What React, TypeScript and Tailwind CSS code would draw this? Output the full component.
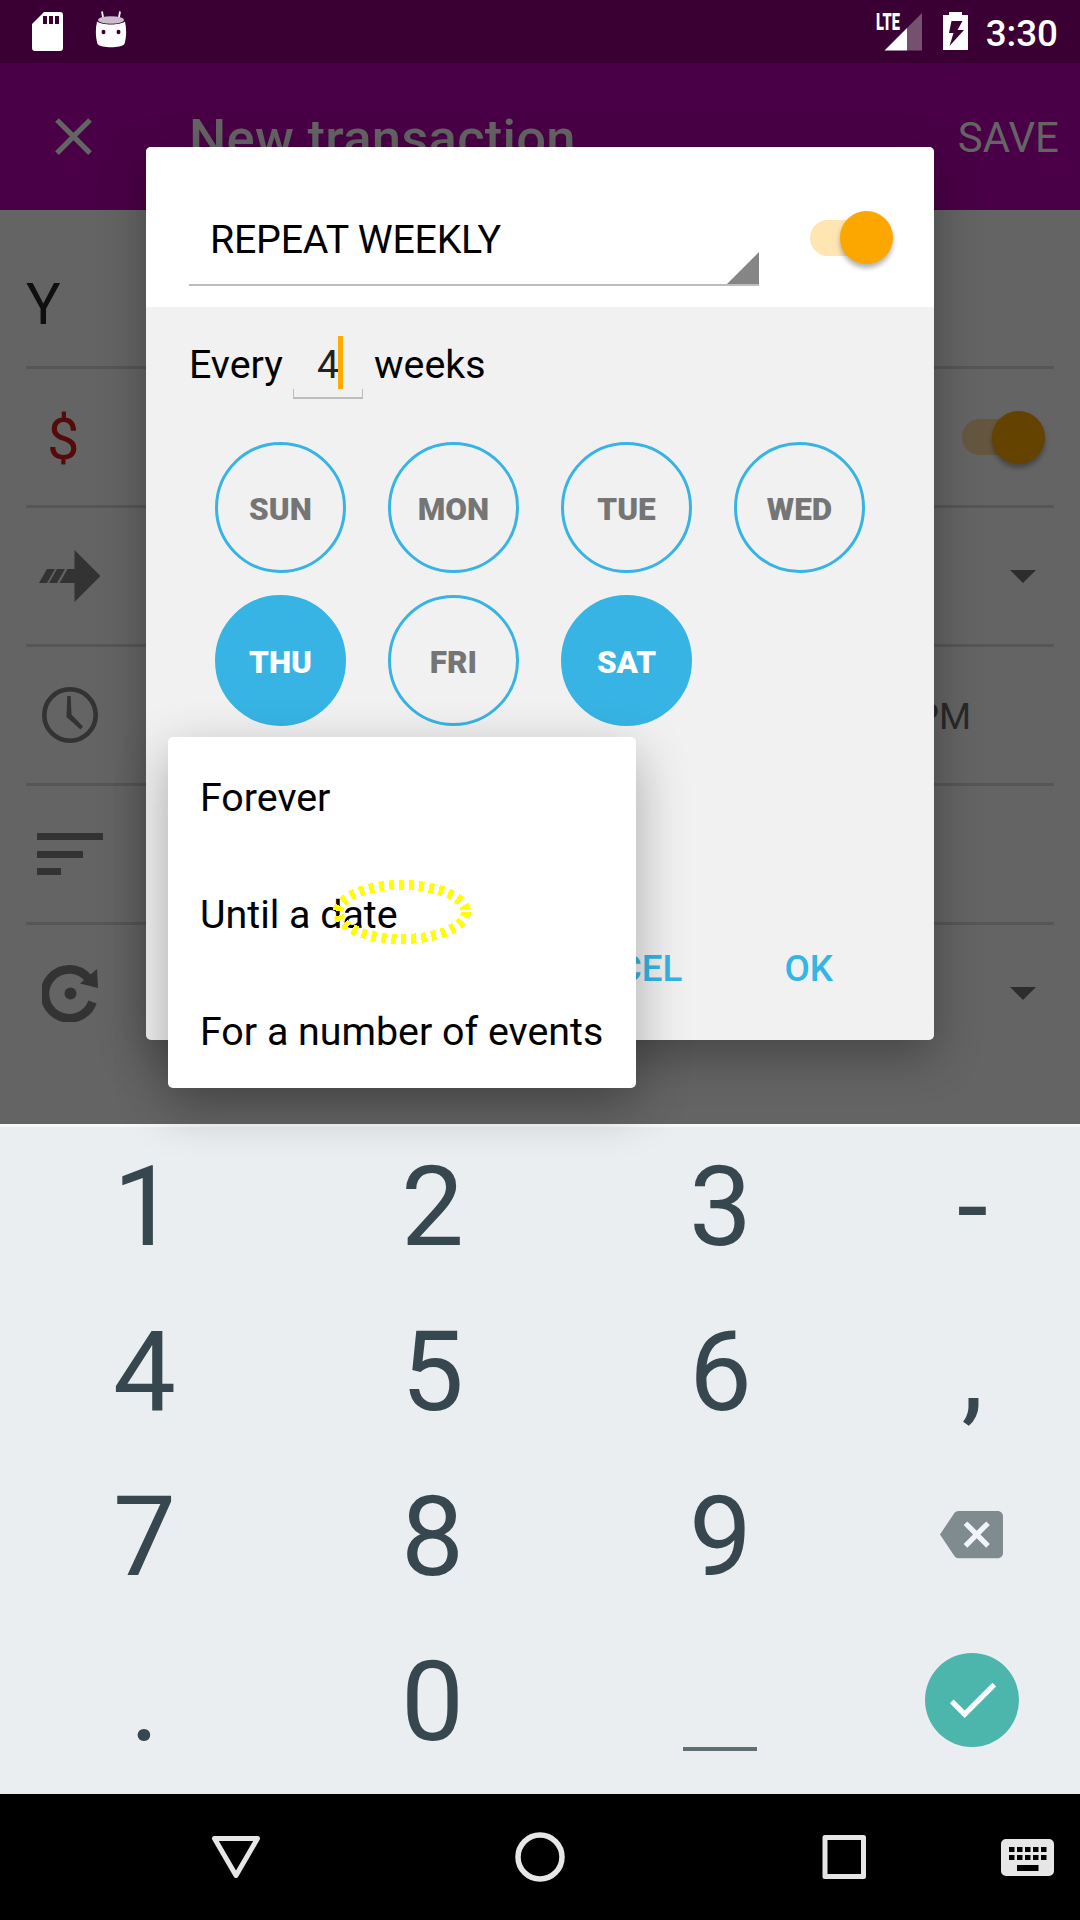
import type { ReactNode } from 'react';

const SdCardIcon = () => (
  <svg className="h-[39px] w-[32px]" viewBox="0 0 32 39">
    <path
      fill="#fff"
      fillRule="evenodd"
      d="M12 0H28a3 3 0 0 1 3 3V36a3 3 0 0 1-3 3H3a3 3 0 0 1-3-3V12zM11 4v8h4V4zM17 4v8h4V4zM23 4v8h4V4z"
    />
  </svg>
);

const AndroidIcon = () => (
  <svg className="h-[37px] w-[32px]" viewBox="0 0 32 37">
    <path d="M7 0.500L8.500 9M25 0.500L23.500 9" stroke="#fff" strokeWidth="1.800" />
    <path fill="#fff" d="M2 10.500C7 14.500 25 14.500 30 10.500C31.700 18 31.500 26 29.500 33C26 37.300 6 37.300 2.500 33C0.500 26 0.300 18 2 10.500Z" />
    <ellipse cx="16" cy="9" rx="13" ry="3.800" fill="#c9bccb" />
    <ellipse cx="8.500" cy="21" rx="2" ry="2.200" fill="#3a0034" />
    <ellipse cx="23.500" cy="21" rx="2" ry="2.200" fill="#3a0034" />
  </svg>
);

const SignalIcon = () => (
  <div className="relative h-[39px] w-[46px]">
    <svg className="h-[39px] w-[46px]" viewBox="0 0 46 39">
      <path d="M46 0V37.500H31V15z" fill="#75506f" />
      <path d="M31 15V37.500H8.500z" fill="#fff" />
    </svg>
    <span className="absolute left-0 top-[-3px] origin-left scale-x-[0.62] text-[23.500px] font-black leading-6 text-white">LTE</span>
  </div>
);

const BatteryIcon = () => (
  <svg className="h-[38px] w-[25px]" viewBox="0 0 25 38">
    <path fill="#fff" fillRule="evenodd" d="M6 0H19V3H25V38H0V3H6zM8.500 9L6 21H10.500L6.500 34L21 18H14.500L19.500 9z" />
  </svg>
);

const CloseIcon = () => (
  <svg className="size-[63px]" viewBox="0 0 24 24" fill="#646464">
    <path d="M19 6.410L17.590 5 12 10.590 6.410 5 5 6.410 10.590 12 5 17.590 6.410 19 12 13.410 17.590 19 19 17.590 13.410 12z" />
  </svg>
);

const ArrowIcon = () => (
  <svg className="ml-[13px] h-[52px] w-[62px]" viewBox="0 0 62 52" fill="#333">
    <path d="M35.500 0L61.500 26L35.500 52V33H20.500L28.500 19H35.500z" />
    <path d="M0 33L8 19H16L8 33zM10 33L18 19H26L18 33z" />
  </svg>
);

const ClockIcon = () => (
  <svg className="ml-4 size-[56px]" viewBox="0 0 56 56">
    <circle cx="28" cy="28" r="25.700" fill="none" stroke="#333" strokeWidth="4.600" />
    <path d="M25.300 9H28.700L29.500 27.500L41 39.500L38.500 42.500L24.500 30z" fill="#333" />
  </svg>
);

const NotesIcon = () => (
  <div className="ml-[11px] flex flex-col gap-[10.500px]">
    <div className="h-[7px] w-[66px] bg-[#333]" />
    <div className="h-[7px] w-[46px] bg-[#333]" />
    <div className="h-[7px] w-[24px] bg-[#333]" />
  </div>
);

const RepeatIcon = () => (
  <svg className="ml-4 size-[58px]" viewBox="0 0 58 58">
    <path d="M46.500 14.500A24.500 24.500 0 1 0 50.500 38" fill="none" stroke="#333" strokeWidth="8.700" />
    <path d="M55 5L56 24L38 19.500z" fill="#333" />
    <circle cx="28.500" cy="29.500" r="6" fill="#333" />
  </svg>
);

const Caret = () => (
  <svg className="mr-[18.500px] h-[13px] w-[26px]" viewBox="0 0 26 13">
    <path d="M0 0H26L13 13z" fill="#2d2d2d" />
  </svg>
);

const Toggle = ({ track, thumb }: { track: string; thumb: string }) => (
  <div className="relative flex h-[53px] w-[83px] items-center">
    <div className={`h-[36px] w-[66px] rounded-full ${track}`} />
    <div className={`absolute right-0 top-0 size-[53px] rounded-full shadow-[0_4px_5px_rgba(0,0,0,0.3)] ${thumb}`} />
  </div>
);

const Row = ({ left, right }: { left: ReactNode; right?: ReactNode }) => (
  <div className="flex h-[139px] items-center justify-between border-b-3 border-[#565656] last:border-transparent">
    {left}
    {right}
  </div>
);

const days = [
  { name: 'SUN', on: false },
  { name: 'MON', on: false },
  { name: 'TUE', on: false },
  { name: 'WED', on: false },
  { name: 'THU', on: true },
  { name: 'FRI', on: false },
  { name: 'SAT', on: true },
];

const Dialog = () => (
  <section className="absolute left-[146px] top-[147px] flex h-[893px] w-[788px] flex-col overflow-clip rounded-[5px] bg-[#f1f1f1] text-[39.375px] text-black">
    <header className="flex h-[160px] shrink-0 items-start bg-white pl-[43px]">
      <div className="relative mt-[45px] flex h-[94px] w-[570px] items-center border-b-2 border-[#bdbdbd] pl-[21px] pt-[3px] tracking-[-0.250px]">
        REPEAT WEEKLY
        <svg className="absolute bottom-0 right-0 size-[32px]" viewBox="0 0 32 32">
          <path d="M0 32L32 0V32z" fill="#858585" />
        </svg>
      </div>
      <div className="ml-[51px] mt-16">
        <Toggle track="bg-[#ffe5b2]" thumb="bg-[#fba700]" />
      </div>
    </header>
    <div className="flex h-[92px] items-start pl-[43px] pt-[29px] leading-[57px]">
      <span className="w-[104px]">Every</span>
      <div className="w-[70px]">
        <div className="flex h-[53px] justify-end pr-[20px] text-[#222]">
          <span className="-mr-px">4</span>
          <span className="h-[53px] w-[5px] bg-[#ffab00]" />
        </div>
        <div className="h-[10px] border-x-[1.500px] border-b-2 border-[#bdbdbd]" />
      </div>
      <span className="ml-[11px]">weeks</span>
    </div>
    <div className="mt-[43px] grid grid-cols-[repeat(4,131px)] gap-x-[42px] gap-y-[22px] pl-[69px]">
      {days.map((d) => (
        <div
          key={d.name}
          className={`flex size-[131px] items-center justify-center rounded-full border-3 border-[#37b4e4] pt-[4px] text-[31.500px] font-black ${
            d.on ? 'bg-[#37b4e4] text-white' : 'text-[#757575]'
          }`}
        >
          {d.name}
        </div>
      ))}
    </div>
    <footer className="mt-auto flex h-[142px] items-center justify-end pr-[101px] text-[36.750px] font-medium text-[#33b5e5]">
      <span className="mr-[102px]">CANCEL</span>
      <span>OK</span>
    </footer>
  </section>
);

const Menu = () => (
  <ul className="absolute left-[168px] top-[737px] w-[468px] rounded-[5px] bg-white text-[39.375px] text-black shadow-[0_18px_52px_rgba(0,0,0,0.3)]">
    {['Forever', 'Until a date', 'For a number of events'].map((t) => (
      <li key={t} className="flex h-[117px] items-center whitespace-nowrap pl-[32px] pt-[4px]">
        {t}
      </li>
    ))}
    <svg className="absolute left-[164px] top-[142px] h-[66px] w-[142px]" viewBox="0 0 142 66" shapeRendering="crispEdges">
      <ellipse cx="70" cy="33" rx="64" ry="27" fill="none" stroke="#ff0" strokeWidth="10" strokeDasharray="5 5" />
    </svg>
  </ul>
);

const Backspace = () => (
  <svg className="mr-[2px] size-[63px]" viewBox="0 0 24 24">
    <path fill="#f2f5f7" d="M8 6h12v12H8z" />
    <path
      fill="#808b8f"
      d="M22 3H7c-.69 0-1.230.35-1.590.88L0 12l5.410 8.110c.36.53.9.89 1.590.89h15c1.100 0 2-.9 2-2V5c0-1.100-.9-2-2-2zm-3 12.590L17.590 17 14 13.410 10.410 17 9 15.590 12.590 12 9 8.410 10.410 7 14 10.590 17.590 7 19 8.410 15.410 12 19 15.590z"
    />
  </svg>
);

const Enter = () => (
  <div className="flex size-[94px] items-center justify-center rounded-full bg-[#4db6ac]">
    <svg className="size-[63px]" viewBox="0 0 24 24" fill="#fff">
      <path d="M9 16.170L4.830 12l-1.420 1.410L9 19 21 7l-1.410-1.410z" />
    </svg>
  </div>
);

const keys: ReactNode[] = [
  '1', '2', '3', '-',
  '4', '5', '6', ',',
  '7', '8', '9', <Backspace />,
  '.', '0', <div className="mt-[98px] h-[4px] w-[74px] bg-[#5f7075]" />, <Enter />,
];

export default function App() {
  return (
    <div className="relative isolate flex h-[1920px] w-[1080px] flex-col overflow-hidden bg-[#646464] font-[Roboto,sans-serif]">
      <div className="flex h-[63px] items-start bg-[#3a0034] pl-8">
        <div className="mt-[12px]"><SdCardIcon /></div>
        <div className="ml-[31px] mt-[11px]"><AndroidIcon /></div>
        <div className="ml-auto mt-[12.500px]"><SignalIcon /></div>
        <div className="ml-[21px] mt-3"><BatteryIcon /></div>
        <span className="ml-[18px] mr-[22px] text-[36.750px] font-medium leading-[67px] text-white">3:30</span>
      </div>
      <div className="flex h-[147px] items-center bg-[#490046] pl-[42px] pr-[21px] text-[#646464]">
        <CloseIcon />
        <h1 className="ml-[84px] pt-[4px] text-[52.500px] font-medium tracking-[0.280px]">New transaction</h1>
        <span className="ml-auto pt-px text-[42px]">SAVE</span>
      </div>
      <main className="h-[914px] px-[26px]">
        <div className="flex h-[159px] items-center border-b-3 border-[#565656] pt-[32px] text-[57.750px] text-[#0f0f0f]">Y</div>
        <Row
          left={<span className="ml-[21px] pt-[4px] text-[57.750px] text-[#550b0b]">$</span>}
          right={<div className="mr-[9px]"><Toggle track="bg-[#65573f]" thumb="bg-[#644200]" /></div>}
        />
        <Row left={<ArrowIcon />} right={<Caret />} />
        <Row left={<ClockIcon />} right={<span className="mr-[83px] pt-[3px] text-[36.750px] text-[#292929]">3:30 PM</span>} />
        <Row left={<NotesIcon />} />
        <Row left={<RepeatIcon />} right={<Caret />} />
      </main>
      <div className="pointer-events-none absolute left-[146px] top-[147px] h-[893px] w-[788px] rounded-[5px] shadow-[0_16px_48px_rgba(0,0,0,0.3)]" />
      <Dialog />
      <div className="relative h-[670px] border-t-3 border-[#f8f8f8] bg-[#ebeef1]">
        <div className="-mt-[5px] grid grid-cols-[288px_288px_288px_216px] grid-rows-[165px_165px_165px_165px] text-[112px] leading-none text-[#37474f]">
          {keys.map((k, i) => (
            <div key={i} className="flex items-center justify-center">
              {typeof k === 'string' ? <span className="pl-px pt-[4px]">{k}</span> : k}
            </div>
          ))}
        </div>
      </div>
      <nav className="relative h-[126px] bg-black">
        <svg className="h-[126px] w-[1080px]" viewBox="0 0 1080 126" fill="none" stroke="#e6e6e6" strokeWidth="5" strokeLinejoin="round">
          <path d="M214.500 44.500H257.500L236 81.500z" />
          <circle cx="540" cy="63" r="22" strokeWidth="5.500" />
          <rect x="825" y="43.500" width="38.500" height="39" />
          <path
            stroke="none"
            fill="#e6e6e6"
            fillRule="evenodd"
            d="M1006 45H1049a5 5 0 0 1 5 5V77a5 5 0 0 1-5 5H1006a5 5 0 0 1-5-5V50a5 5 0 0 1 5-5zM1009 53v5h5.500v-5zm8 0v5h5.500v-5zm8 0v5h5.500v-5zm8 0v5h5.500v-5zm8 0v5h5.500v-5zM1009 61v5h5.500v-5zm8 0v5h5.500v-5zm8 0v5h5.500v-5zm8 0v5h5.500v-5zm8 0v5h5.500v-5zM1017 71v6h21.500v-6z"
          />
        </svg>
      </nav>
      <Menu />
    </div>
  );
}
